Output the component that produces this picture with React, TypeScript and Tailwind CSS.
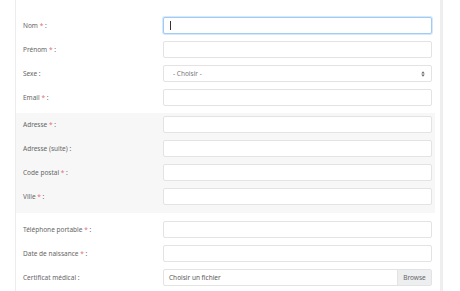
import React from "react";

type Field = {
  label: string;
  required?: boolean;
  kind?: "text" | "select" | "file";
  focused?: boolean;
};

const topFields: Field[] = [
  { label: "Nom", required: true, focused: true },
  { label: "Prénom", required: true },
  { label: "Sexe", kind: "select" },
  { label: "Email", required: true },
];

const addressFields: Field[] = [
  { label: "Adresse", required: true },
  { label: "Adresse (suite)" },
  { label: "Code postal", required: true },
  { label: "Ville", required: true },
];

const bottomFields: Field[] = [
  { label: "Téléphone portable", required: true },
  { label: "Date de naissance", required: true },
  { label: "Certificat médical", kind: "file" },
];

function SelectArrows() {
  return (
    <svg width="4" height="6" viewBox="0 0 4 6" className="shrink-0">
      <path d="M2 0.3 L3.7 2.5 H0.3 Z" fill="#666" />
      <path d="M2 5.7 L3.7 3.5 H0.3 Z" fill="#666" />
    </svg>
  );
}

function Control({ field }: { field: Field }) {
  if (field.kind === "select") {
    return (
      <div className="flex h-[17px] w-[269px] items-center justify-between rounded-[2px] border border-[#e3e3e3] bg-white pl-[9px] pr-[6px] text-[6.5px] text-[#777]">
        <span>- Choisir -</span>
        <SelectArrows />
      </div>
    );
  }
  if (field.kind === "file") {
    return (
      <div className="flex h-[17px] w-[269px] items-stretch overflow-hidden rounded-[2px] border border-[#e3e3e3] bg-white text-[6.5px] text-[#5a5a5a]">
        <span className="flex flex-1 items-center pl-[5px]">Choisir un fichier</span>
        <span className="flex w-[34px] items-center justify-center border-l border-[#e3e3e3] bg-[#eceeef] text-[#666]">
          Browse
        </span>
      </div>
    );
  }
  if (field.focused) {
    return (
      <div className="flex h-[17px] w-[269px] items-center rounded-[2px] border border-[#9fcbf4] bg-white pl-[6px] shadow-[0_0_0_1px_#d6e9fb]">
        <span className="h-[9px] w-px bg-[#333]" />
      </div>
    );
  }
  return <div className="h-[17px] w-[269px] rounded-[2px] border border-[#e3e3e3] bg-white" />;
}

function Row({ field }: { field: Field }) {
  return (
    <div className="mb-[7px] flex items-center">
      <label className="w-[147px] pl-[7px] text-[6.5px] text-[#666]">
        {field.label}
        {field.required && <span className="text-[#e0707a]"> *</span>} :
      </label>
      <Control field={field} />
    </div>
  );
}

export default function App() {
  return (
    <div
      className="h-[291px] w-[460px] overflow-hidden bg-white"
      style={{ fontFamily: '"Noto Sans", "Open Sans", sans-serif' }}
    >
      <div className="ml-[15px] h-full w-[428px] border-l border-r-[3px] border-l-[#ececec] border-r-[#eeeeee] pt-[17px]">
        <div className="pr-[5px]">
          {topFields.map((f) => (
            <Row key={f.label} field={f} />
          ))}
        </div>
        <div className="mr-[5px] bg-[#f7f7f7] pb-px pt-[3px]">
          {addressFields.map((f) => (
            <Row key={f.label} field={f} />
          ))}
        </div>
        <div className="mt-[8px] pr-[5px]">
          {bottomFields.map((f) => (
            <Row key={f.label} field={f} />
          ))}
        </div>
      </div>
    </div>
  );
}
